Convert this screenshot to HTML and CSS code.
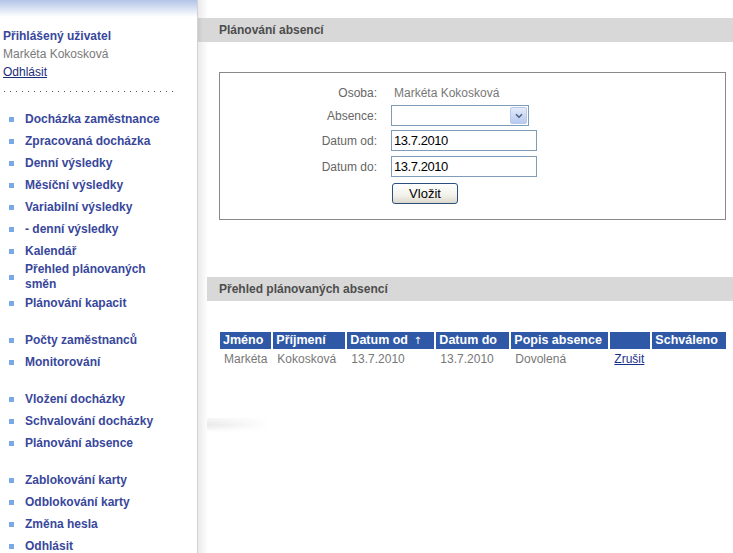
FILE: index.html
```html
<!DOCTYPE html>
<html lang="cs">
<head>
  <meta charset="UTF-8">
  <title>Plánování absencí</title>
  <link rel="stylesheet" href="styles.css">
</head>
<body>
<div class="page">
  <aside class="sidebar">
    <div class="user">
      <div class="user-title">Přihlášený uživatel</div>
      <div class="user-name">Markéta Kokosková</div>
      <a href="#" class="logout">Odhlásit</a>
    </div>
    <div class="dots"></div>
    <ul class="menu">
      <li><span class="bullet"></span><a href="#">Docházka zaměstnance</a></li>
      <li><span class="bullet"></span><a href="#">Zpracovaná docházka</a></li>
      <li><span class="bullet"></span><a href="#">Denní výsledky</a></li>
      <li><span class="bullet"></span><a href="#">Měsíční výsledky</a></li>
      <li><span class="bullet"></span><a href="#">Variabilní výsledky</a></li>
      <li><span class="bullet"></span><a href="#">- denní výsledky</a></li>
      <li><span class="bullet"></span><a href="#">Kalendář</a></li>
      <li class="two-line"><span class="bullet"></span><a href="#">Přehled plánovaných směn</a></li>
      <li><span class="bullet"></span><a href="#">Plánování kapacit</a></li>
      <li class="group-start"><span class="bullet"></span><a href="#">Počty zaměstnanců</a></li>
      <li><span class="bullet"></span><a href="#">Monitorování</a></li>
      <li class="group-start"><span class="bullet"></span><a href="#">Vložení docházky</a></li>
      <li><span class="bullet"></span><a href="#">Schvalování docházky</a></li>
      <li><span class="bullet"></span><a href="#">Plánování absence</a></li>
      <li class="group-start"><span class="bullet"></span><a href="#">Zablokování karty</a></li>
      <li><span class="bullet"></span><a href="#">Odblokování karty</a></li>
      <li><span class="bullet"></span><a href="#">Změna hesla</a></li>
      <li><span class="bullet"></span><a href="#">Odhlásit</a></li>
    </ul>
  </aside>

  <main class="content">
    <div class="bar bar-top">Plánování absencí</div>

    <div class="form-box">
      <div class="form-row row-person">
        <label>Osoba:</label>
        <span class="person">Markéta Kokosková</span>
      </div>
      <div class="form-row row-absence">
        <label>Absence:</label>
        <div class="select-box">
          <span class="select-btn">
            <svg width="8" height="6" viewBox="0 0 8 6"><path d="M1 1.2 L4 4.2 L7 1.2" fill="none" stroke="#4d6185" stroke-width="1.6"/></svg>
          </span>
        </div>
      </div>
      <div class="form-row row-from">
        <label>Datum od:</label>
        <input type="text" value="13.7.2010">
      </div>
      <div class="form-row row-to">
        <label>Datum do:</label>
        <input type="text" value="13.7.2010">
      </div>
      <div class="form-row">
        <label></label>
        <button>Vložit</button>
      </div>
    </div>

    <div class="bar bar-list">Přehled plánovaných absencí</div>

    <table class="grid">
      <tr>
        <th class="c-name">Jméno</th>
        <th class="c-surname">Příjmení</th>
        <th class="c-from">Datum od <span class="arrow">↑</span></th>
        <th class="c-to">Datum do</th>
        <th class="c-desc">Popis absence</th>
        <th class="c-act"></th>
        <th class="c-ok">Schváleno</th>
      </tr>
      <tr>
        <td>Markéta</td>
        <td>Kokosková</td>
        <td>13.7.2010</td>
        <td>13.7.2010</td>
        <td>Dovolená</td>
        <td><a href="#">Zrušit</a></td>
        <td></td>
      </tr>
    </table>

    <div class="smudge"></div>
  </main>
</div>
</body>
</html>
```

FILE: styles.css
```css
html, body {
  margin: 0;
  height: 100%;
  overflow: hidden;
}
body {
  font-family: 'Liberation Sans', Arial, sans-serif;
  font-size: 12px;
  background: #fff;
  color: #333;
}
.page {
  display: flex;
  height: 100vh;
}
.sidebar {
  width: 197px;
  flex-shrink: 0;
  border-right: 1px solid #d2d2d2;
  background: linear-gradient(#b3c4e8, #fff 17px) no-repeat;
}
.user {
  padding: 27px 0 0 3px;
  line-height: 18px;
}
.user-title {
  font-weight: bold;
  color: #38479b;
}
.user-name {
  color: #7a7a7a;
}
.logout {
  color: #1c2d7c;
}
.dots {
  margin: 10px 0 0 4px;
  width: 170px;
  height: 1px;
  background: repeating-linear-gradient(to right, #555 0 1px, transparent 1px 6px);
}
.menu {
  list-style: none;
  margin: 16px 0 0;
  padding: 0;
}
.menu li {
  display: flex;
  align-items: center;
  height: 22px;
  padding-left: 9px;
}
.menu li.two-line {
  height: 30px;
}
.menu li.group-start {
  margin-top: 15px;
}
.bullet {
  width: 5px;
  height: 5px;
  background: #7aa9e8;
  margin-right: 11px;
  flex-shrink: 0;
}
.menu a {
  max-width: 145px;
  font-weight: bold;
  color: #38479b;
  text-decoration: none;
  line-height: 15px;
}

.content {
  flex: 1;
  background: linear-gradient(to right, #eaeaea, #fff 10px) no-repeat;
}
.bar {
  height: 24px;
  line-height: 24px;
  background: #d8d8d8;
  font-weight: bold;
  color: #4d4d4d;
}
.bar-top {
  margin-top: 18px;
  padding-left: 21px;
  background: linear-gradient(to right, #cacaca, #d8d8d8 5px);
}
.bar-list {
  margin: 57px 0 0 9px;
  padding-left: 12px;
}

.form-box {
  margin: 30px 7px 0 21px;
  border: 1px solid #888;
  padding: 12px 0 15px;
}
.form-row {
  display: flex;
  align-items: center;
  height: 21px;
}
.form-row label {
  width: 157px;
  margin-right: 14px;
  text-align: right;
  color: #666;
  flex-shrink: 0;
}
.row-person {
  height: 16px;
  margin-bottom: 4px;
}
.row-absence { margin-bottom: 4px; }
.row-from { margin-bottom: 5px; }
.row-to { margin-bottom: 6px; }
.person {
  color: #777;
  padding-left: 3px;
}
.select-box {
  width: 138px;
  height: 21px;
  box-sizing: border-box;
  border: 1px solid #7f9db9;
  background: #fff;
  display: flex;
  justify-content: flex-end;
  padding: 1px;
}
.select-btn {
  width: 15px;
  height: 15px;
  border: 1px solid #b9c9ec;
  border-radius: 2px;
  background: linear-gradient(#e3ebfb, #b6c9ef);
  display: flex;
  align-items: center;
  justify-content: center;
}
input {
  width: 146px;
  height: 21px;
  box-sizing: border-box;
  border: 1px solid #7f9db9;
  padding: 0 2px;
  margin: 0;
  font-family: 'Liberation Sans', Arial, sans-serif;
  font-size: 13px;
  letter-spacing: -0.45px;
  color: #000;
}
button {
  width: 66px;
  height: 21px;
  margin: 0 0 0 1px;
  padding: 0;
  border: 1px solid #2c4f7c;
  border-radius: 3px;
  background: linear-gradient(#fff, #f2f1ea 60%, #dcd8cc);
  font-family: 'Liberation Sans', Arial, sans-serif;
  font-size: 13px;
  color: #000;
}

.grid {
  margin: 29px 0 0 20px;
  border-collapse: separate;
  border-spacing: 2px;
}
.grid th {
  height: 17px;
  padding: 0 3px;
  background: #2f58a6;
  color: #fff;
  font-size: 12.5px;
  font-weight: bold;
  text-align: left;
  white-space: nowrap;
  line-height: 17px;
  box-sizing: border-box;
}
.grid td {
  height: 16px;
  padding: 0 4px;
  color: #777;
  white-space: nowrap;
}
.grid td a {
  color: #1a2f8a;
}
.c-name { width: 51px; }
.c-surname { width: 72px; }
.c-from { width: 87px; }
.c-to { width: 73px; }
.c-desc { width: 97px; }
.c-act { width: 40px; }
.c-ok { width: 74px; }
.arrow {
  font-family: 'DejaVu Sans', sans-serif;
  font-weight: normal;
  font-size: 10px;
  margin-left: 2px;
}
.smudge {
  margin: 49px 0 0 9px;
  width: 62px;
  height: 14px;
  background: linear-gradient(to right, rgba(255,255,255,0), #fff), linear-gradient(#f6f6f6, #e9e9e9 50%, #fff);
}
```
